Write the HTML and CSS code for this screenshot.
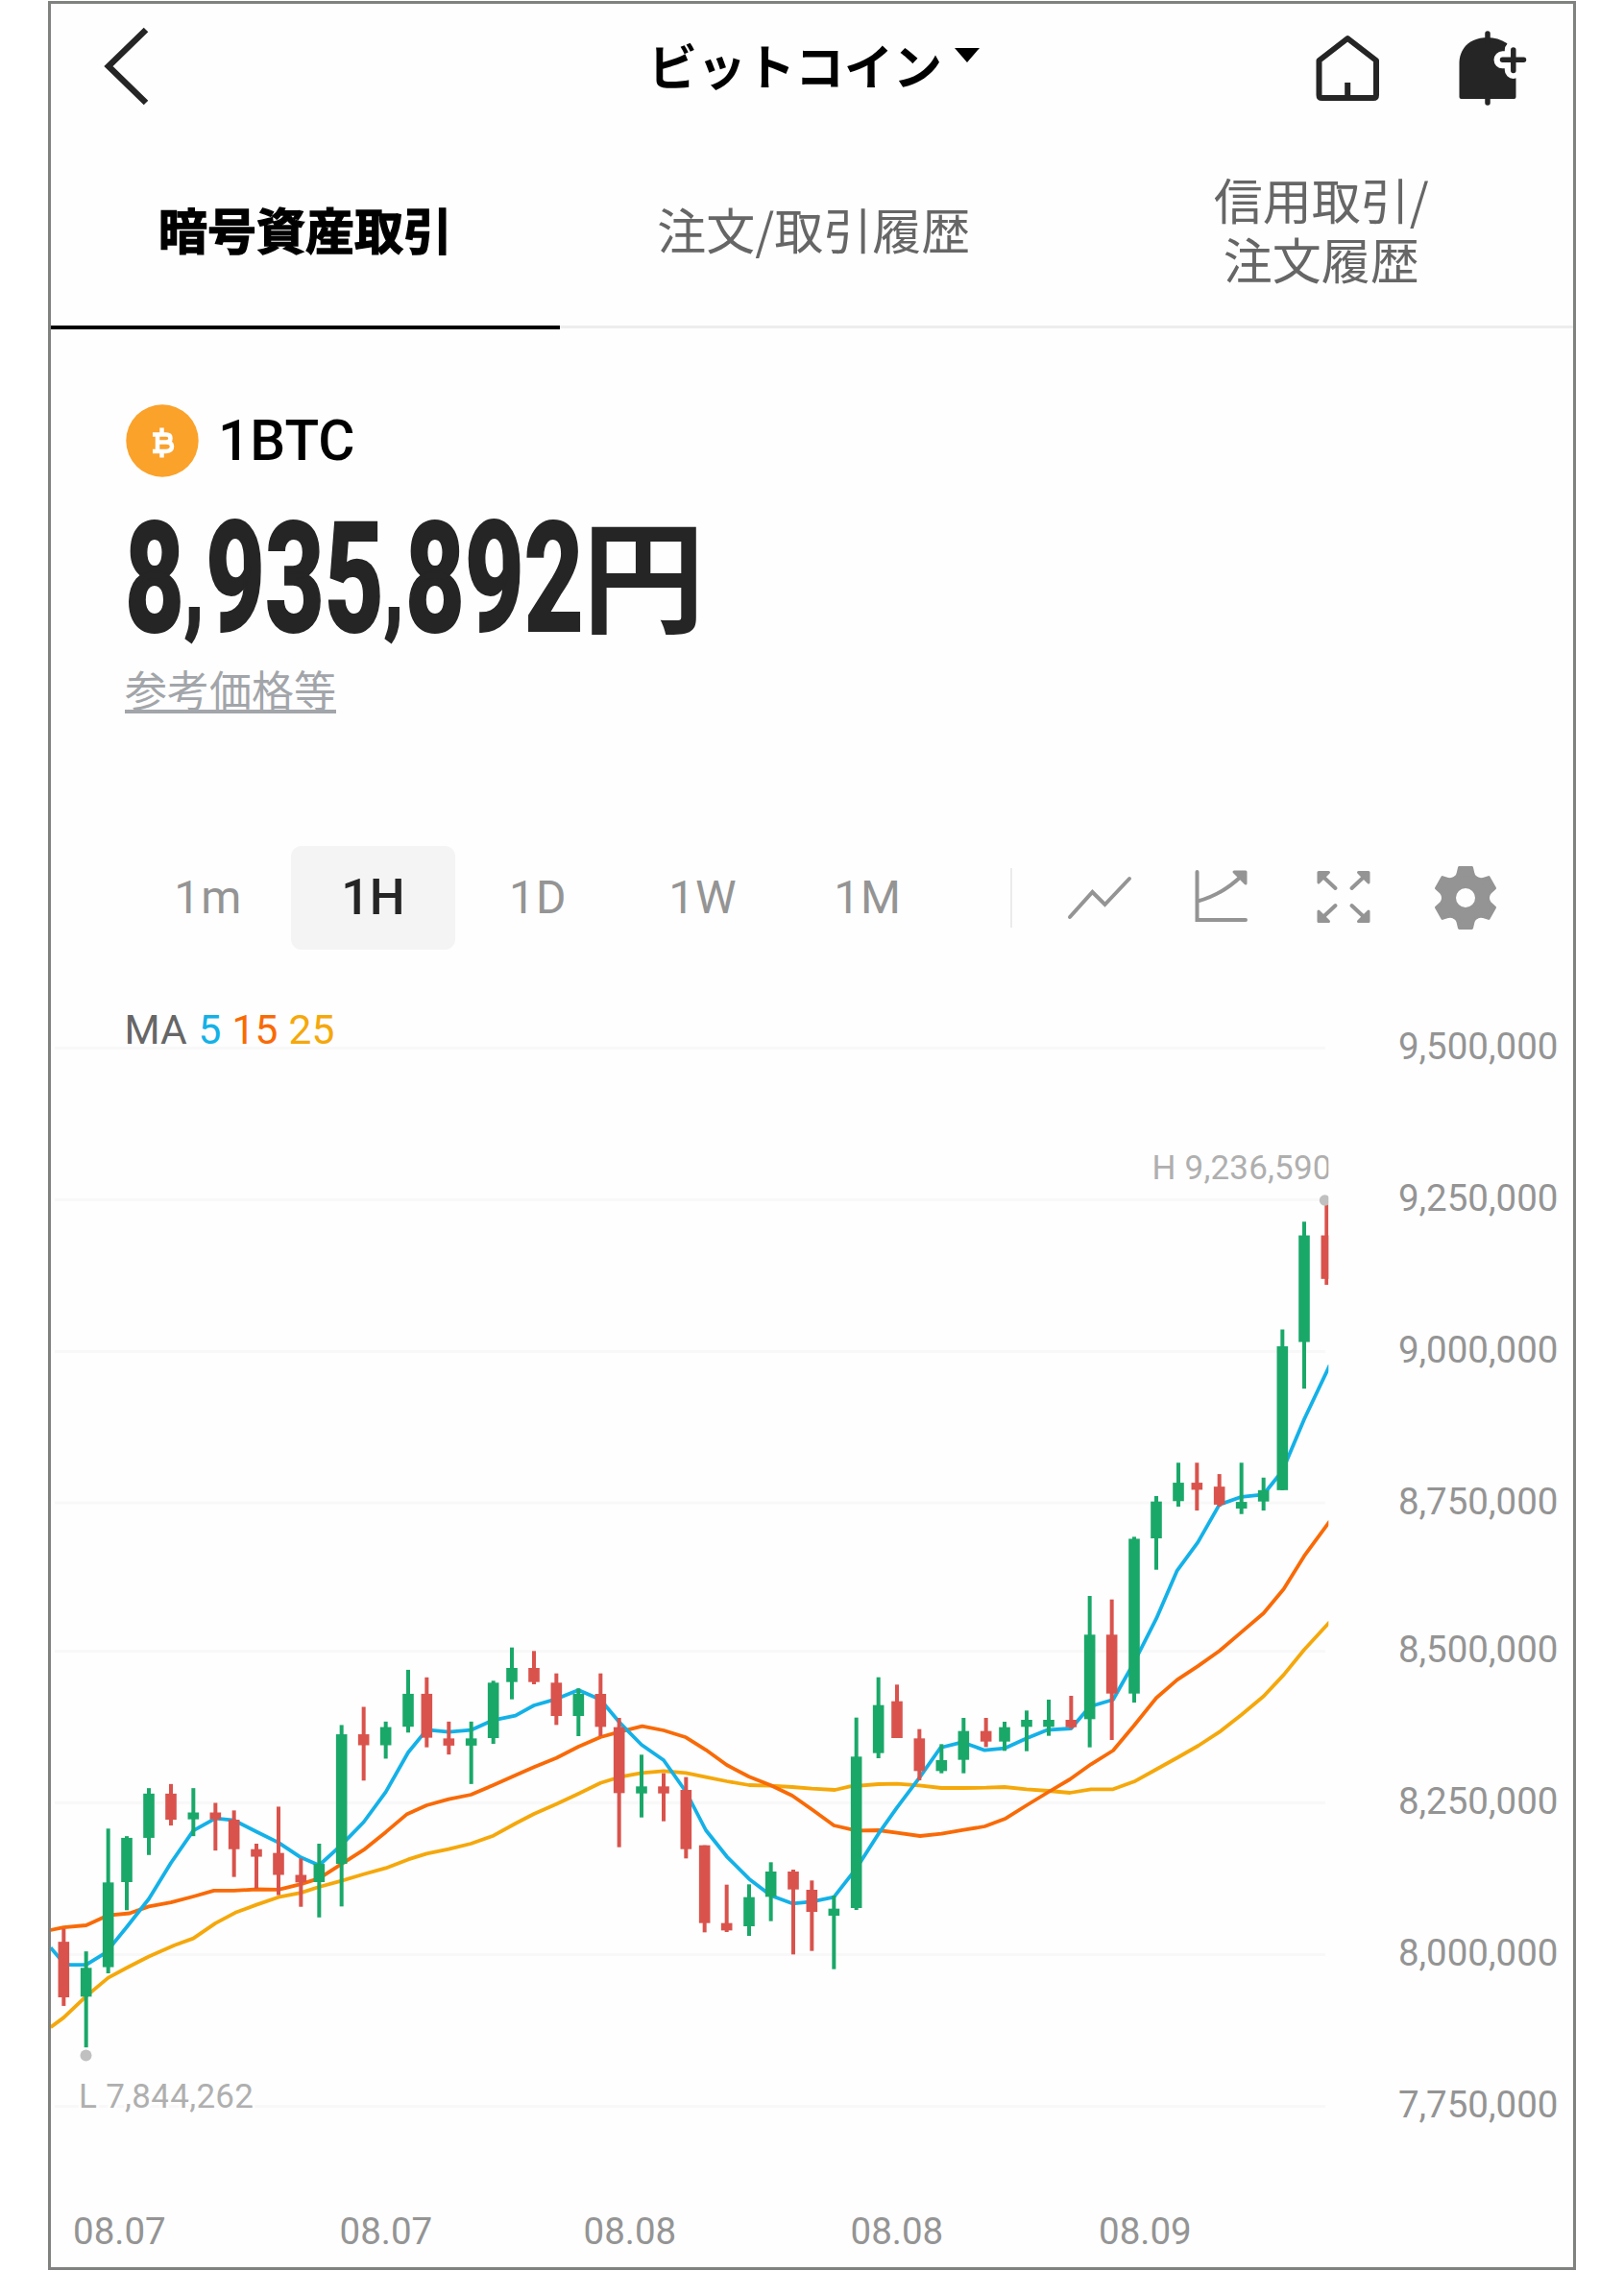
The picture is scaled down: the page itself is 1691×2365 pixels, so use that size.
FILE: index.html
```html
<!DOCTYPE html>
<html lang="ja">
<head>
<meta charset="utf-8">
<title>ビットコイン</title>
<link rel="stylesheet" href="styles.css">
</head>
<body>
<main class="screen">
  <header class="topbar">
    <svg class="back" width="52" height="88" viewBox="105 25 52 88"><path d="M152 31L113 69L152 107"/></svg>
    <h1 class="title">ビットコイン<svg class="caret" width="26" height="15" viewBox="0 0 26 15"><path d="M0 0H26L13 15Z"/></svg></h1>
    <div class="actions">
      <svg class="home" width="68" height="74" viewBox="1369 34 68 74"><path d="M1403.200 40L1433 63V99Q1433 102 1430 102H1376.500Q1373.500 102 1373.500 99V63ZM1403.200 86V102"/></svg>
      <svg class="bell" width="76" height="82" viewBox="1517 30 76 82">
        <path class="fill" d="M1519.500 101V66C1519.500 49 1532 39 1549 39C1556 39 1563 41 1569 45L1578.500 60V101Q1578.500 103 1576.500 103H1521.500Q1519.500 103 1519.500 101Z"/>
        <path class="stem" d="M1549 35V45M1549 98V107"/>
        <path class="halo" d="M1575.800 52V73M1564.500 62.300H1586"/>
        <path class="stem" d="M1575.800 52V73.500M1564.500 62.300H1586.500"/>
      </svg>
    </div>
  </header>

  <nav class="tabs">
    <a class="tab active">暗号資産取引</a>
    <a class="tab">注文/取引履歴</a>
    <a class="tab">信用取引/<br>注文履歴</a>
  </nav>

  <section class="asset">
    <div class="unit">
      <svg width="76" height="76" viewBox="0 0 76 76"><circle cx="38" cy="38" r="37.700" fill="#fba22b"/><path class="coin" d="M28 31.500H42Q46.500 31.500 46.500 35.500T42 39.500H33M42 39.500Q48 39.500 48 44T42 49H28M33 31.500V49M37.500 24.500V31M37.500 49V55.500"/></svg>
      <span>1BTC</span>
    </div>
    <div class="price"><span class="digits"><span>8<small>,</small>935<small>,</small>892</span></span><span class="yen">円</span></div>
    <a class="ref">参考価格等</a>
  </section>

  <div class="toolbar">
    <button>1m</button><button class="on">1H</button><button>1D</button><button>1W</button><button>1M</button>
    <i class="divider"></i>
    <span class="tool"><svg viewBox="1109 899 72 72"><path d="M1114 955L1137.500 929L1150.500 942L1176 915"/></svg></span>
    <span class="tool"><svg viewBox="1235 899 72 72"><path d="M1245.500 908V958H1296M1246 938.500Q1271 932 1292 912"/><path class="solid" d="M1284 908H1296V920Z"/></svg></span>
    <span class="tool"><svg viewBox="1362.500 899 72 72"><path d="M1374 910L1390 925M1423 910L1407 925M1374 958L1390 943M1423 958L1407 943"/><path class="solid" d="M1372.500 908.500H1383L1372.500 919ZM1424.500 908.500H1414L1424.500 919ZM1372.500 959.500H1383L1372.500 949ZM1424.500 959.500H1414L1424.500 949Z"/></svg></span>
    <span class="tool"><svg viewBox="-36 -36 72 72"><defs><path id="tooth" d="M-14 -19Q-9 -21.500 -8 -25L-6.500 -31.500H6.500L8 -25Q9 -21.500 14 -19Z"/></defs>
      <g class="gear"><use href="#tooth"/><use href="#tooth" transform="rotate(60)"/><use href="#tooth" transform="rotate(120)"/><use href="#tooth" transform="rotate(180)"/><use href="#tooth" transform="rotate(240)"/><use href="#tooth" transform="rotate(300)"/></g><circle r="16.500" class="ring"/></svg></span>
  </div>

  <svg class="chart" width="1585" height="1321" viewBox="53 1040 1585 1321">
    <defs><clipPath id="plot"><rect x="53" y="1040" width="1330.300" height="1321"/></clipPath></defs>
    <g id="grid"></g>
    <text class="legend" x="129.500" y="1086.500">MA</text>
    <text class="legend ma5" x="206.500" y="1086.500">5</text>
    <text class="legend ma15" x="241.500" y="1086.500">15</text>
    <text class="legend ma25" x="300.500" y="1086.500">25</text>
    <g clip-path="url(#plot)">
      <g id="averages"></g>
      <g id="candles"></g>
      <circle class="mark" cx="1379.500" cy="1250" r="5.700"/>
      <text class="extreme" x="1199.500" y="1228" textLength="187">H 9,236,590</text>
      <circle class="mark" cx="89.500" cy="2140.500" r="6"/>
      <text class="extreme" x="82" y="2195" textLength="182">L 7,844,262</text>
    </g>
    <g id="dates"></g>
  </svg>
</main>
<script src="chart.js"></script>
</body>
</html>
```
FILE: styles.css
```css
* { box-sizing: border-box; }
body { margin: 0; background: #fff; font-family: Roboto, "Noto Sans CJK JP", sans-serif; overflow: hidden; }
.screen { margin: 1px 0 0 50px; width: 1591px; height: 2363px; border: 3px solid #808280; background: #fefefe; }

.topbar { height: 130px; padding: 0 45px 0 52px; display: grid; grid-template-columns: 1fr auto 1fr; align-items: center; }
.back path { fill: none; stroke: #252525; stroke-width: 6.5; }
.title { margin: -4px 0 0 -3px; display: flex; gap: 13px; font: 700 51px/80px "Noto Sans CJK JP", sans-serif; color: #000; }
.caret { margin-top: 23px; }
.actions { display: flex; justify-content: flex-end; align-items: center; gap: 80px; margin-top: 4px; }
.home path, .stem { fill: none; stroke: #252525; stroke-width: 6; stroke-linejoin: round; stroke-linecap: round; }
.home path { stroke-linecap: butt; }
.bell .fill { fill: #252525; }
.bell .stem { stroke-width: 5.5; }
.bell .halo { fill: none; stroke: #fefefe; stroke-width: 18; stroke-linecap: round; }

.tabs { height: 209px; display: grid; grid-template-columns: 530px 1fr 1fr; }
.tab { display: flex; align-items: center; justify-content: center; text-align: center; padding: 2px 0 0 1px; border-bottom: 3px solid #ededed; font: 400 51px/62px "Noto Sans CJK JP", sans-serif; color: #666; height: 208px; }
.tab:last-child { padding-left: 3px; }
.tab.active { font-weight: 700; color: #000; border-bottom: 4px solid #000; height: 209px; padding-left: 0; -webkit-text-stroke: 1.4px #000; }

.asset { padding: 78px 0 0 78px; height: 538px; }
.unit { display: flex; align-items: center; gap: 20px; height: 76px; font: 500 58.5px/76px Roboto, sans-serif; color: #000; }
.coin { fill: none; stroke: #fff; stroke-width: 4.5; }
.price { display: flex; height: 192px; color: #252525; }
.digits { width: 474px; white-space: nowrap; font: 800 160px/194px Roboto, sans-serif; margin: 9px 0 0 -1px; }
.digits > span { display: inline-block; transform: scaleX(.67); transform-origin: 0 50%; -webkit-text-stroke: 2px #252525; }
.digits small { font-size: 118px; line-height: 1; position: relative; top: -10px; margin-right: 3px; }
.yen { font: 700 128px/194px "Noto Sans CJK JP", sans-serif; margin-left: 2px; margin-top: 1px; }
.ref { display: block; width: 220px; margin-left: -1px; font: 400 44px/56px "Noto Sans CJK JP", sans-serif; color: #a2a5a9; text-decoration: underline; text-decoration-thickness: 4px; text-decoration-skip-ink: none; text-underline-offset: 3px; }

.toolbar { display: flex; align-items: center; height: 108px; padding-left: 78px; margin-bottom: 51px; }
.toolbar button { width: 171.7px; height: 108px; padding: 0; border: 0; background: none; border-radius: 11px; font: 400 48px/108px Roboto, sans-serif; letter-spacing: 1px; color: #949494; }
.toolbar .on { background: #f4f4f4; color: #252525; font-weight: 500; font-size: 52px; letter-spacing: 0; }
.divider { width: 2px; height: 62px; background: #ebebeb; margin: 0 27px 0 63px; }
.tool { width: 127px; display: flex; justify-content: center; }
.tool svg { width: 72px; height: 72px; fill: none; stroke: #949494; stroke-width: 4; stroke-linecap: round; }
.tool .solid { fill: #949494; stroke-width: 3; stroke-linejoin: round; }
.gear { fill: #949494; stroke-width: 3; stroke-linejoin: round; }
.tool .ring { stroke-width: 13; }

.chart { display: block; font-family: Roboto, sans-serif; }
.gridline { stroke: #f8f8f8; stroke-width: 3; }
.axis { font-size: 38.5px; fill: #949494; }
.legend { font-size: 42.5px; fill: #666; }
.legend.ma5 { fill: #14b1e7; }
.legend.ma15 { fill: #f96a06; }
.legend.ma25 { fill: #f5a80b; }
.extreme { font-size: 35px; fill: #afafaf; stroke: #fefefe; stroke-width: 6; paint-order: stroke; }
.mark { fill: #c0c0c0; }
.line { fill: none; stroke-width: 3.8; stroke-linejoin: round; }
.line.ma5 { stroke: #14b1e7; }
.line.ma15 { stroke: #f96a06; }
.line.ma25 { stroke: #f5a80b; }
.up { fill: #1aa869; }
.down { fill: #d9534c; }
```
FILE: chart.js
```js
const NS = 'http://www.w3.org/2000/svg';
function add(id, tag, attrs, text) {
  const el = document.createElementNS(NS, tag);
  for (const k in attrs) el.setAttribute(k, attrs[k]);
  if (text) el.textContent = text;
  document.getElementById(id).append(el);
}

// Horizontal price levels
[['9,500,000', 1091.5], ['9,250,000', 1249.5], ['9,000,000', 1407.5], ['8,750,000', 1565], ['8,500,000', 1719.5],
 ['8,250,000', 1877.5], ['8,000,000', 2035.5], ['7,750,000', 2193.5]].forEach(([label, y]) => {
  add('grid', 'line', { class: 'gridline', x1: 57, x2: 1380, y1: y, y2: y });
  add('grid', 'text', { class: 'axis', x: 1622.5, y: y + 11.5, 'text-anchor': 'end' }, label);
});
[['08.07', 76], ['08.07', 353.5], ['08.08', 607.5], ['08.08', 885.5], ['08.09', 1144]].forEach(([label, x]) =>
  add('dates', 'text', { class: 'axis', x, y: 2336.5 }, label));

// Each section of the series has its own origin and vertical scale; x is in thirds of a pixel.
// Candle rows: direction, x, high, body top, body bottom, low
const sections = [
  { x: 40, y: 1680, k: 2.8,
    candles: [['d',79,920,958,1120,1145],['u',149,986,1034,1118,1266],['u',218,628,785,1032,1050],['u',276,650,655,784,866],['u',345,510,526,655,705],['d',414,498,526,602,619],['u',484,510,581,601,650],['d',553,553,581,601,692],['d',611,575,602,688,769],['d',681,672,688,710,803],['d',750,564,699,763,822],['d',820,715,763,785,856],['u',877,672,731,784,887],['u',947,326,353,731,855],['d',1016,273,353,385,488],['u',1085,316,332,385,424],['u',1155,165,235,331,348],['d',1213,187,235,363,391],['d',1282,316,365,386,412],['u',1352,316,365,386,498]],
    ma5: [38,975,65,1005,95,1025,149,1025,205,993,235,962,276,915,345,833,414,728,484,634,553,598,611,604,681,637,750,669,820,712,877,735,947,675,1016,609,1085,521,1155,406,1213,340,1282,346],
    ma15: [38,924,79,916,149,910,218,881,285,875,345,855,414,843,484,826,548,809,611,809,681,805,750,806,820,790,877,773,947,731,1016,690,1085,638,1150,587,1213,560,1282,542],
    ma25: [38,1207,79,1179,149,1117,218,1063,276,1034,345,1001,425,968,484,948,553,904,615,873,681,850,750,828,820,815,877,798,947,780,1016,761,1085,743,1155,718,1213,701,1282,688] },
  { x: 480, y: 1680, k: 3,
    candles: [['u',101,211,217,390,408],['u',159,107,171,215,269],['d',228,118,171,215,222],['d',298,188,217,321,349],['u',367,235,252,321,384],['d',436,188,252,355,384],['d',494,327,356,562,731],['u',564,442,541,563,638],['d',633,500,541,563,650],['d',703,512,552,737,766],['d',761,725,725,968,997],['d',830,848,968,991,996],['u',900,847,887,978,1008],['u',968,778,807,886,962],['d',1038,801,807,863,1066],['d',1096,835,864,933,1055],['u',1165,882,923,945,1112],['u',1235,326,448,921,927],['u',1304,200,287,437,453],['d',1362,223,275,390,390]],
    ma5: [31,365,101,334,170,320,228,288,298,268,367,240,436,270,494,340,564,411,633,459,703,558,765,678,830,760,900,830,968,882,1035,907,1096,901,1165,887,1235,797,1304,689,1362,607],
    ma15: [31,567,101,537,170,506,228,481,298,452,367,417,436,387,494,371,566,353,633,366,703,388,765,427,830,474,900,511,968,538,1035,570,1096,613,1165,663,1235,679,1304,678,1362,686],
    ma25: [31,720,101,695,170,657,228,627,298,596,367,564,436,530,494,512,564,499,633,493,703,499,765,512,830,525,900,537,968,539,1035,543,1096,548,1168,552,1215,541,1304,534,1362,533] },
  { x: 860, y: 1640, k: 3,
    candles: [['d',292,482,511,613,642],['u',361,529,579,613,620],['u',430,447,488,578,620],['d',500,447,488,521,538],['u',558,459,476,521,550],['u',627,424,453,475,551],['u',696,390,453,475,503],['d',766,378,453,476,481],['u',824,66,187,451,539],['d',893,77,187,371,516]],
    ma5: [292,634,358,540,425,523,496,548,558,542,627,511,690,485,766,480,824,412,897,390,963,273],
    ma15: [294,816,361,809,430,797,496,786,562,761,627,720,696,678,762,639,828,592,897,549,963,470],
    ma25: [292,658,361,666,430,666,500,665,558,663,627,670,696,675,762,681,828,670,897,670,963,646,1030,609,1100,570,1163,534] },
  { x: 1120, y: 1180, k: 2.45,
    candles: [['u',183,1030,1035,1430,1453],['u',252,926,940,1034,1114],['u',321,841,892,939,953],['d',379,841,892,910,963],['d',449,870,902,948,953],['u',518,841,941,958,972],['u',587,879,911,940,963],['u',646,501,544,911,911],['u',714,226,261,533,652],['d',784,182,261,372,387]],
    ma5: [252,1239,317,1116,382,1044,449,948,518,928,587,922,646,862,714,730,794,592],
    ma15: [252,1441,317,1395,382,1360,449,1321,518,1273,587,1225,650,1163,714,1079,794,990],
    ma25: [449,1528,518,1484,587,1437,650,1382,714,1318,794,1247] }
];

for (const name of ['ma25', 'ma15', 'ma5']) {
  const points = [];
  for (const s of sections) {
    for (let i = 0; i < s[name].length; i += 2) points.push((s.x + s[name][i] / 3).toFixed(1) + ',' + (s.y + s[name][i + 1] / s.k).toFixed(1));
  }
  add('averages', 'polyline', { class: 'line ' + name, points: points.join(' ') });
}
for (const s of sections) {
  for (const [dir, cx, high, top, bottom, low] of s.candles) {
    const x = s.x + cx / 3, y = v => s.y + v / s.k, cls = dir === 'u' ? 'up' : 'down';
    add('candles', 'rect', { class: cls, x: x - 2, width: 4, y: y(high), height: (low - high) / s.k });
    add('candles', 'rect', { class: cls, x: x - 5.8, width: 11.6, y: y(top), height: (bottom - top) / s.k });
  }
}
```
